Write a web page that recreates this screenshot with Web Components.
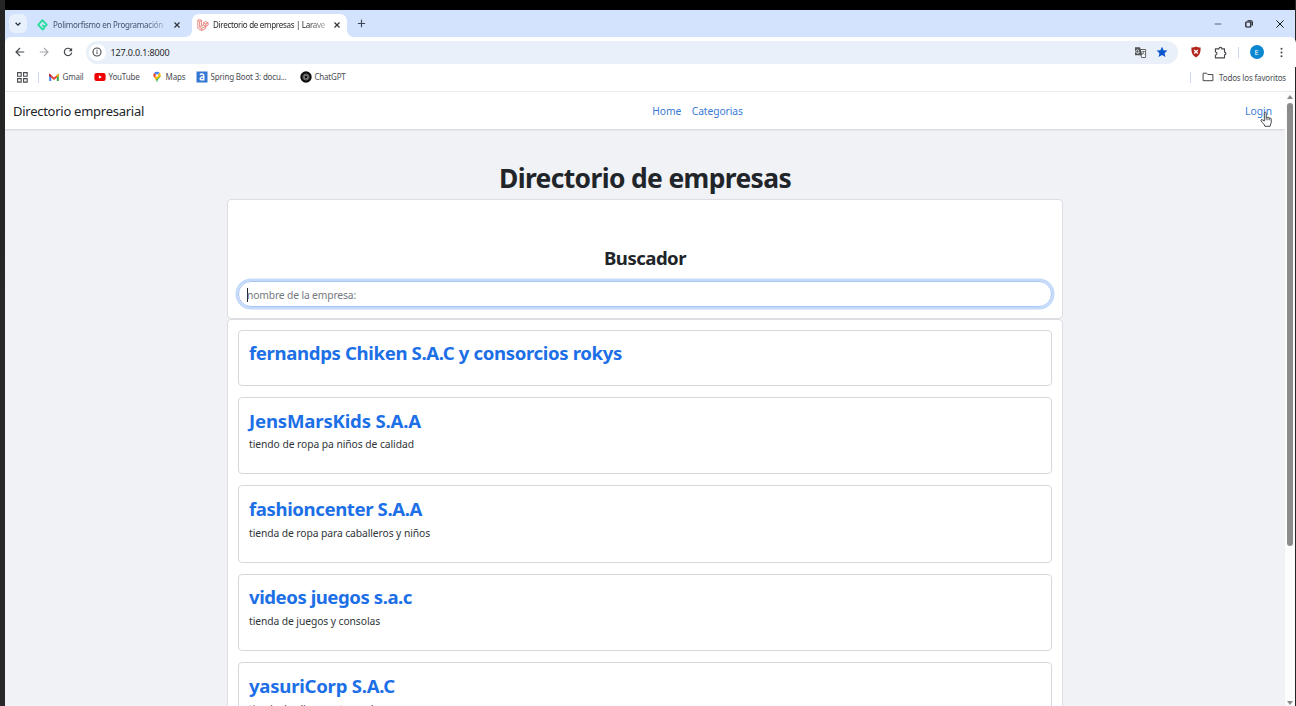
<!DOCTYPE html>
<html lang="es">
<head>
<meta charset="utf-8">
<title>Directorio de empresas | Laravel</title>
<style>
html,body{margin:0;height:100%;overflow:hidden;background:#252525}
body{font-family:"Noto Sans","Open Sans",sans-serif;color:#212529}
</style>
</head>
<body>
<desktop-frame>
  <tab-strip slot="chrome">
    <browser-tab icon="platzi" w="110" style="width:165px;padding:0 10px 0 10px">Polimorfismo en Programación</browser-tab>
    <browser-tab icon="laravel" w="112" active style="width:155px">Directorio de empresas | Larave</browser-tab>
  </tab-strip>
  <address-bar slot="chrome" url="127.0.0.1:8000"></address-bar>
  <bookmarks-bar slot="chrome">
    <book-mark icon="gmail" w="21" style="width:46px">Gmail</book-mark>
    <book-mark icon="youtube" w="31" style="width:57px">YouTube</book-mark>
    <book-mark icon="maps" w="20" style="width:45px">Maps</book-mark>
    <book-mark icon="spring" w="76" style="width:104px">Spring Boot 3: docu...</book-mark>
    <book-mark icon="gpt" w="31">ChatGPT</book-mark>
  </bookmarks-bar>
  <site-nav slot="page"></site-nav>
  <directory-page slot="page">
    <company-card w="373" heading="fernandps Chiken S.A.C y consorcios rokys"></company-card>
    <company-card w="172" heading="JensMarsKids S.A.A" dw="165" text="tiendo de ropa pa niños de calidad"></company-card>
    <company-card w="173" heading="fashioncenter S.A.A" dw="181" text="tienda de ropa para caballeros y niños"></company-card>
    <company-card w="163" heading="videos juegos s.a.c" dw="131" text="tienda de juegos y consolas"></company-card>
    <company-card w="146" heading="yasuriCorp S.A.C" dw="130" text="tienda de ollas y sartenes de"></company-card>
  </directory-page>
</desktop-frame>
<script>
const ICONS = {
  down:['0 0 10 10','<path d="M2.6 3.8 5 6.2 7.4 3.8" fill="none" stroke="#26303f" stroke-width="1.3"/>'],
  close:['0 0 10 10','<path d="M2.5 2.5l5 5M7.500 2.500 2.500 7.500" stroke="#303236" stroke-width="1.15"/>'],
  plus:['0 0 10 10','<path d="M5 1.7v6.6M1.7 5h6.6" stroke="#3c4657" stroke-width="1.05"/>'],
  platzi:['0 0 12 12','<path d="M8.1 3.8 5.4 1.2 1.2 5.9l4.5 4.6 2.1-2.1M5.6 1.5 9.8 5.6 7.4 8 5.2 5.9" fill="none" stroke="#2bdd9d" stroke-width="1.8" stroke-linejoin="round"/>'],
  laravel:['0 0 12 12','<path d="M.8 1.3 2.7.5l1.9 1v5.7l2-1.1V3.7l2.2-1.2 2.3 1.2v2.4L8.8 7.4v2L4.7 11.6.8 9.4ZM.8 1.3l1.9 1 1.9-.8M2.7 2.3v6.1l2 1.1V11.6M6.6 3.7l2.2 1.2 2.3-1.2M8.8 4.9v2.5l-4.1 2.1M2.7 8.4l1.9-1.2M6.6 6.1l2.2 1.3" fill="none" stroke="#e4655d" stroke-width=".75"/>'],
  back:['0 0 12 12','<path d="M10.2 6H2M6 2 2 6l4 4" fill="none" stroke="#45484c" stroke-width="1.15"/>'],
  forward:['0 0 12 12','<path d="M1.8 6H10M6 2l4 4-4 4" fill="none" stroke="#a4a6aa" stroke-width="1.1"/>'],
  reload:['0 0 12 12','<path d="M9.2 4A3.7 3.7 0 1 0 9.7 6.6" fill="none" stroke="#45484c" stroke-width="1.2"/><path d="M10.1 1.8v3.4H6.7Z" fill="#45484c"/>'],
  info:['0 0 12 12','<circle cx="6" cy="6" r="4" fill="none" stroke="#45484c" stroke-width="1.1"/><path d="M6 5.4V8.1M6 3.8v1" stroke="#45484c"/>'],
  translate:['0 0 13 13','<path d="M5 3.5h6.6v8H7.6L6.8 9" fill="#fff" stroke="#505358" stroke-width=".9"/><path d="M1 1.2h5L8.4 9.3H1Z" fill="#505358"/><path d="M5 4.7A1.7 1.7 0 1 0 5.2 6H3.7" fill="none" stroke="#fff" stroke-width=".8"/><path d="M7.6 5.6h3.3M9.2 4.7v.9M10.2 5.7 8 8.7M8.1 6.4l2.5 2.5" stroke="#505358" stroke-width=".7"/>'],
  star:['0 0 12 12','<path d="m6 .8 1.6 3.4 3.8.4-2.8 2.6.8 3.7L6 9l-3.4 1.9.8-3.7L.6 4.6l3.8-.4Z" fill="#0b57d0"/>'],
  shield:['0 0 12 12','<path d="M6 .6c1.5.8 2.9 1 4.6 1C10.7 7 9.6 9.5 6 11.5 2.4 9.5 1.3 7 1.4 1.6 3.1 1.6 4.5 1.4 6 .6Z" fill="#b3261e"/><path d="m4.2 3.9 3.6 3.6m0-3.6L4.2 7.5" stroke="#fff" stroke-width="1.4"/>'],
  puzzle:['0 0 12 12','<path d="M1.300 2.700h3.200c0-1.900 2.800-1.900 2.800 0h2.400v2.900c1.700 0 1.700 2.500 0 2.500v2.800H1.300V8.300c1.900 0 1.900-2.800 0-2.800Z" fill="none" stroke="#45484c" stroke-width="1.050" stroke-linejoin="round"/>'],
  dots:['0 0 12 12','<circle cx="6" cy="2" r="1.1" fill="#45484c"/><circle cx="6" cy="6" r="1.1" fill="#45484c"/><circle cx="6" cy="10" r="1.1" fill="#45484c"/>'],
  apps:['0 0 12 12','<path d="M1.500 1.500h3.300v3.300H1.500ZM7 1.500h3.300v3.300H7ZM1.500 7h3.300v3.300H1.500ZM7 7h3.300v3.300H7Z" fill="none" stroke="#45484c" stroke-width="1"/>'],
  gmail:['0 0 12 10','<path d="M1.200 1.500 6 5.400l4.800-3.900V4L6 7.900 1.200 4Z" fill="#ea4335"/><path d="M1.200 2v7h2V4.500Z" fill="#4285f4"/><path d="M10.800 2v7h-2V4.500Z" fill="#34a853"/><path d="M8.800 3.100l2-1.600V4l-2 1.600Z" fill="#fbbc04"/><path d="M1.200 1.500l2 1.600v2.500l-2-1.600Z" fill="#c5221f"/>'],
  youtube:['0 0 12 10','<rect x=".4" y="1" width="11.200" height="8" rx="2" fill="#f00000"/><path d="M4.900 3.200v3.600L7.900 5Z" fill="#fff"/>'],
  maps:['0 0 12 12','<path d="M6 .7A3.800 3.800 0 0 0 3.100 2L6 4.500 8.700 1.700A3.700 3.700 0 0 0 6 .7Z" fill="#4285f4"/><path d="M3.100 2C1.700 4 2.500 5.600 3.300 6.700L6 4.500Z" fill="#ea4335"/><path d="M3.300 6.700 5 9.200 9.600 5.500C10 4 9.600 2.500 8.700 1.700Z" fill="#fbbc04"/><path d="M5 8.700C5.600 9.700 5.700 11.200 6 11.300c.5-.2.300-1.700 1.300-3.200C8.500 6.800 9.500 6.200 9.700 4.900Z" fill="#34a853"/><circle cx="6" cy="4.500" r="1.300" fill="#fff"/>'],
  spring:['0 0 12 12','<rect x=".5" y=".5" width="11" height="11" fill="#3478d4"/><path d="M4 3.700C4.800 2.700 7.800 2.600 7.800 4.700v4.700M7.800 5.700C3.600 5.500 3.500 8.800 5.200 8.800 6.700 8.800 7.800 8 7.800 6.900" fill="none" stroke="#fff" stroke-width="1.400"/>'],
  gpt:['0 0 12 12','<circle cx="6" cy="6" r="5.700" fill="#0b0b0b"/><g fill="none" stroke="#aaa" stroke-width=".5"><ellipse cx="6" cy="6" rx="1.700" ry="3.400"/><ellipse cx="6" cy="6" rx="1.700" ry="3.400" transform="rotate(60 6 6)"/><ellipse cx="6" cy="6" rx="1.700" ry="3.400" transform="rotate(120 6 6)"/></g>'],
  folder:['0 0 12 12','<path d="M1.100 2.200h3.500l1.200 1.300h5.100v6.200H1.100Z" fill="none" stroke="#45484c" stroke-width="1" stroke-linejoin="round"/>'],
  minimize:['0 0 10 10','<path d="M1.700 5h6.600" stroke="#5d6675" stroke-width="1"/>'],
  restore:['0 0 10 10','<rect x="1.800" y="3" width="5" height="5" rx=".8" fill="none" stroke="#111" stroke-width="1.200"/><path d="M3.500 1.700h3.300q1.500 0 1.500 1.500v3.200" fill="none" stroke="#111" stroke-width="1.100"/>'],
  exit:['0 0 10 10','<path d="m1.500 1.500 7 7m0-7-7 7" stroke="#111" stroke-width="1"/>'],
  hand:['0 0 14 18','<path d="M4.700 10.700V2.400c0-1.500 2-1.500 2 0v4.500c.2-.8 1.800-.7 1.800.4.300-.7 1.800-.5 1.800.5.400-.6 1.700-.3 1.700.8v3.100c0 1.600-1 2.300-1.200 4.500H5.300C4.800 14 2.600 12.600 1.200 10.300.7 9 2.200 8.700 3 9.500Z" fill="#fff" stroke="#222832" stroke-width=".9"/><path d="M6.700 6.900v2.900M8.500 7.300v2.500M10.300 7.800v2" stroke="#222832" stroke-width=".7"/>']
};
const define = (name, markup) => customElements.define(name, class extends HTMLElement {
  connectedCallback(){
    if (this.shadowRoot) return;
    this.attachShadow({mode:'open'}).innerHTML = typeof markup === 'function' ? markup(this) : markup;
  }
});

define('app-icon', el => {
  const [box, body] = ICONS[el.getAttribute('name')], s = el.getAttribute('size') || 12;
  return `<style>:host{display:block;flex:none;width:${s}px;height:${s}px}svg{display:block;width:100%;height:100%}</style><svg viewBox="${box}">${body}</svg>`;
});

/* Single line of text whose tracking is adjusted so that it spans the width in "w". */
const pen = document.createElement('canvas').getContext('2d');
customElements.define('fit-text', class extends HTMLElement {
  connectedCallback(){
    if (this.shadowRoot) return;
    this.attachShadow({mode:'open'}).innerHTML = '<style>:host{display:block;flex:none;white-space:pre}</style><slot></slot>';
    const cs = getComputedStyle(this), text = this.textContent, w = +this.getAttribute('w');
    pen.font = `${cs.fontWeight} ${cs.fontSize} ${cs.fontFamily}`;
    this.style.letterSpacing = ((w - pen.measureText(text).width) / text.length).toFixed(3) + 'px';
    this.style.width = w + 'px';
  }
});

define('desktop-frame', `<style>
  :host{display:grid;grid-template-columns:5px 1290px 1px;height:706px;overflow:hidden}
  .edge{background:linear-gradient(#252525 0 230px,#292829 300px)}
  .window{display:flex;flex-direction:column;height:706px;border-top:10px solid #000;box-sizing:border-box;min-width:0;background:#fff}
  .view{flex:1;display:grid;grid-template-columns:1280px 10px;min-height:0;border-top:1px solid #e9ebee}
  .page{display:flex;flex-direction:column;overflow:hidden;min-height:0;background:#f0f2f6}
</style>
<div class="edge"></div>
<div class="window"><slot name="chrome"></slot><div class="view"><div class="page"><slot name="page"></slot></div><scroll-track></scroll-track></div></div>
<div></div>`);

define('tab-strip', `<style>
  :host{display:flex;align-items:flex-end;height:27px;flex:none;background:#d3e3fd;padding-left:4px}
  .menu{display:grid;place-items:center;width:18px;height:19px;border-radius:6px;background:#e8f0fd;margin-bottom:4px}
  .new{margin:0 0 8px 9px}
  .controls{display:flex;gap:21px;margin:0 10.500px 8px auto}
</style>
<div class="menu"><app-icon name="down" size="10"></app-icon></div>
<slot></slot>
<app-icon class="new" name="plus" size="11"></app-icon>
<div class="controls"><app-icon name="minimize" size="10"></app-icon><app-icon name="restore" size="10"></app-icon><app-icon name="exit" size="10"></app-icon></div>`);

define('browser-tab', el => `<style>
  :host{display:flex;align-items:center;box-sizing:border-box;height:23px;padding:0 5px 0 5px;font-size:8px;color:#45546b;position:relative}
  :host([active]){background:#fff;border-radius:7px 7px 0 0;color:#1f2023}
  :host([active])::before,:host([active])::after{content:"";position:absolute;bottom:0;width:6px;height:6px}
  :host([active])::before{left:-6px;background:radial-gradient(circle at 0 0,transparent 5.500px,#fff 6px)}
  :host([active])::after{right:-6px;background:radial-gradient(circle at 100% 0,transparent 5.500px,#fff 6px)}
  app-icon{margin-bottom:2px}
  fit-text{margin:0 0 1px 4px;line-height:14px;-webkit-mask:linear-gradient(90deg,#000 85%,rgba(0,0,0,.35))}
  .x{margin-left:auto}
</style>
<app-icon name="${el.getAttribute('icon')}" size="12"></app-icon>
<fit-text w="${el.getAttribute('w')}">${el.textContent}</fit-text>
<app-icon class="x" name="close" size="10"></app-icon>`);

define('address-bar', el => `<style>
  :host{display:flex;align-items:center;height:30px;flex:none;background:#d3e3fd}
  .row{display:flex;align-items:center;flex:1;height:30px;background:#fff;border-radius:6px 6px 0 0;padding:0 9px;box-sizing:border-box}
  .field{display:flex;align-items:center;box-sizing:border-box;width:1092px;height:23px;border-radius:12px;background:#e9f0f9;margin-left:11.500px;padding:0 9.500px 0 3px;font-size:9px;color:#26282c}
  .site{display:grid;place-items:center;width:17px;height:17px;border-radius:50%;background:#fff;margin-right:5px}
  .gap{margin-left:12px}.star{margin-left:9px}
  .sep{width:1px;height:11px;background:#c9d8f0;margin:0 11px 0 11px}
  .who{display:grid;place-items:center;width:14px;height:14px;border-radius:50%;background:#0b87cf;color:#fff;font-size:7.500px;line-height:14px;margin-right:12px}
</style>
<div class="row">
  <app-icon name="back" size="12"></app-icon><app-icon class="gap" name="forward" size="12"></app-icon><app-icon class="gap" name="reload" size="12"></app-icon>
  <div class="field"><div class="site"><app-icon name="info" size="12"></app-icon></div><fit-text w="59">${el.getAttribute('url')}</fit-text><app-icon name="translate" size="13" style="margin-left:auto"></app-icon><app-icon class="star" name="star" size="12"></app-icon></div>
  <app-icon name="shield" size="12" style="margin-left:12px"></app-icon><app-icon name="puzzle" size="13" style="margin-left:12px"></app-icon>
  <div class="sep"></div><div class="who">E</div><app-icon name="dots" size="11"></app-icon>
</div>`);

define('bookmarks-bar', `<style>
  :host{display:flex;align-items:center;height:24px;flex:none;background:#fff;padding:0 9px 4px 11px;font-size:8px;color:#4b4e53;box-sizing:border-box}
  .sep{width:1px;height:11px;background:#c9d8f0}
  .all{display:flex;align-items:center;margin-left:auto}
</style>
<app-icon name="apps" size="13"></app-icon><div class="sep" style="margin:0 9px 0 8.500px"></div>
<slot></slot>
<div class="all"><div class="sep"></div><app-icon name="folder" size="12" style="margin:0 5px 0 11px"></app-icon><fit-text w="67">Todos los favoritos</fit-text></div>`);

define('book-mark', el => `<style>:host{display:flex;align-items:center;gap:3px;flex:none;line-height:14px}</style>
<app-icon name="${el.getAttribute('icon')}" size="12"></app-icon><fit-text w="${el.getAttribute('w')}">${el.textContent}</fit-text>`);

define('site-nav', `<style>
  :host{display:grid;grid-template-columns:1fr auto 1fr;align-items:center;height:37px;flex:none;background:#fff;box-shadow:0 1px 2px rgba(0,0,0,.13);padding:0 13px 0 8px;position:relative;z-index:1;font-size:10.300px;color:#3a7bd5}
  .brand{font-size:13px;color:#212529}
  .links{display:flex;gap:10.500px;padding-left:110px}
  .login{justify-self:end;position:relative}
  .pointer{position:absolute;left:13px;top:7.500px}
</style>
<fit-text class="brand" w="131">Directorio empresarial</fit-text>
<div class="links"><fit-text w="29">Home</fit-text><fit-text w="51">Categorias</fit-text></div>
<div class="login"><fit-text w="27">Login</fit-text><app-icon class="pointer" name="hand" size="17"></app-icon></div>`);

define('directory-page', `<style>
  :host{display:flex;flex-direction:column;align-items:center;padding-top:28px}
  h1,h2{margin:0;font-weight:700}
  h1{font-size:26.400px;line-height:42px}
  .card{box-sizing:border-box;width:836px;border:1px solid #dcdee1;border-radius:4px;background:#fff;flex:none}
  .search{height:119.500px;padding:43px 10px 0;display:flex;flex-direction:column;align-items:center}
  h2{font-size:18.600px;line-height:30px}
  .input{box-sizing:border-box;width:814px;height:26px;margin-top:8px;border:1px solid #a9c6f3;border-radius:13px;box-shadow:0 0 0 2.500px #c4dafb;display:flex;align-items:center;padding:1px 0 0 8px;font-size:10.300px;color:#74797e;flex:none}
  .caret{width:1px;height:14px;background:#222;margin-right:-1px}
  .list{display:flex;flex-direction:column;gap:11px;padding:10px 10px}
</style>
<h1><fit-text w="292">Directorio de empresas</fit-text></h1>
<section class="card search"><h2><fit-text w="82">Buscador</fit-text></h2><div class="input"><span class="caret"></span><fit-text w="109">nombre de la empresa:</fit-text></div></section>
<section class="card list"><slot></slot></section>`);

define('company-card', el => {
  const text = el.getAttribute('text');
  return `<style>
  :host{display:block;box-sizing:border-box;height:${text ? 77.4 : 56.5}px;border:1px solid #d6d8db;border-radius:4px;padding:8.500px 10px 0;background:#fff}
  h2{margin:0;font-size:18.600px;line-height:28px;font-weight:700;color:#1c6fe6}
  p{margin:1.800px 0 0;font-size:10.300px;line-height:17px;color:#303539}
</style><h2><fit-text w="${el.getAttribute('w')}">${el.getAttribute('heading')}</fit-text></h2>${text ? `<p><fit-text w="${el.getAttribute('dw')}">${text}</fit-text></p>` : ''}`;
});

define('scroll-track', `<style>
  :host{display:flex;flex-direction:column;align-items:center;background:#fcfcfc}
  .up,.down{width:0;height:0;border:3.500px solid transparent}
  .up{border-top:0;border-bottom:4px solid #8b8b8b;margin-top:3px}
  .down{border-bottom:0;border-top:4px solid #8b8b8b;margin:auto 0 1px}
  .thumb{width:6px;height:443px;border-radius:3px;background:#8b8b8b;margin-top:4px}
</style><div class="up"></div><div class="thumb"></div><div class="down"></div>`);
</script>
</body>
</html>
